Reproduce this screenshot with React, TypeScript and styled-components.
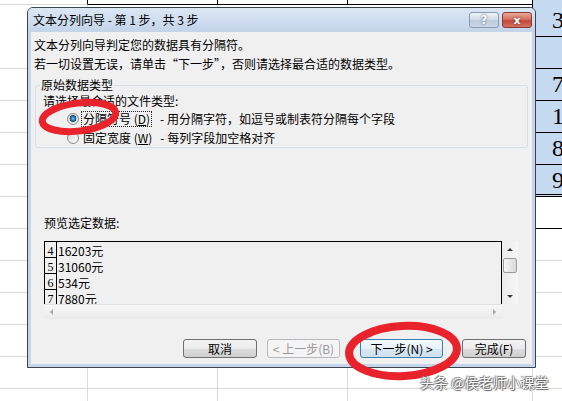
import React from "react";
import styled, { createGlobalStyle } from "styled-components";

const GlobalStyle = createGlobalStyle`
  html, body {
    margin: 0;
    padding: 0;
  }
  body {
    background: #fff;
    font-family: "Noto Sans CJK SC", "Liberation Sans", sans-serif;
    font-size: 12px;
    color: #000;
  }
`;

const Page = styled.div`
  position: relative;
  width: 562px;
  height: 401px;
  overflow: hidden;
  background: #fff;
`;

/* ---------- spreadsheet behind the dialog ---------- */

type Line = "gray" | "black" | "double" | "none";

const lineCss = (l: Line) =>
  l === "black"
    ? "1px solid #000"
    : l === "double"
    ? "3px double #000"
    : l === "none"
    ? "1px solid transparent"
    : "1px solid #d9d9d9";

const Sheet = styled.div`
  margin-top: -27px;
  display: flex;
  flex-direction: column;
`;

const SheetRow = styled.div`
  display: flex;
  height: 32px;
  flex-shrink: 0;
`;

const Cell = styled.div<{ $w: number; $right: Line; $bottom: Line; $fill?: boolean }>`
  width: ${p => p.$w}px;
  flex-shrink: 0;
  box-sizing: border-box;
  border-right: ${p => lineCss(p.$right)};
  border-bottom: ${p => lineCss(p.$bottom)};
  background: ${p => (p.$fill ? "#c5d9f1" : "#fff")};
  font-family: "Liberation Serif", serif;
  font-size: 24px;
  line-height: 31px;
  padding-left: 19px;
  overflow: hidden;
  white-space: nowrap;
`;

const COLS = [88, 130, 130, 185, 60];
const BIG = ["3", "", "7", "1", "8", "9"];

const buildSheet = () => {
  const rows = [];
  for (let r = 0; r < 14; r++) {
    const cells = COLS.map((w, c) => {
      let right: Line = "gray";
      let bottom: Line = "gray";
      let fill = false;
      let text = "";
      if (r === 0) {
        right = c < 4 ? "black" : "none";
        bottom = c === 0 ? "gray" : c === 4 ? "none" : "black";
        fill = c === 4;
      }
      if (r === 1 && c === 0) bottom = "none";
      if (r >= 1 && r <= 7 && c === 3) right = "black";
      if (c === 4 && r >= 1 && r <= 6) {
        fill = true;
        bottom = r === 6 ? "double" : "black";
        text = BIG[r - 1];
      }
      if (c === 4 && r === 7) bottom = "black";
      return (
        <Cell key={c} $w={w} $right={right} $bottom={bottom} $fill={fill}>
          {text}
        </Cell>
      );
    });
    rows.push(<SheetRow key={r}>{cells}</SheetRow>);
  }
  return rows;
};

/* ---------- dialog window ---------- */

const Dialog = styled.div`
  position: absolute;
  left: 27px;
  top: 7px;
  width: 509px;
  height: 361px;
  box-sizing: border-box;
  border: 1px solid #3a4350;
  border-radius: 6px 6px 0 0;
  background: #c6d6ea;
  padding: 0 3px 3px;
  display: flex;
  flex-direction: column;
`;

const TitleBar = styled.div`
  height: 24px;
  margin: 0 -3px;
  padding: 0 3px 0 5px;
  display: flex;
  align-items: center;
  justify-content: space-between;
  border-radius: 5px 5px 0 0;
  background: linear-gradient(#dce7f4, #c3d4e9);
`;

const Title = styled.span`
  font-size: 12px;
  line-height: 16px;
  color: #000;
  white-space: pre;
`;

const CaptionButtons = styled.div`
  display: flex;
  gap: 3px;
`;

const CaptionButton = styled.div<{ $close?: boolean }>`
  width: 30px;
  height: 16px;
  box-sizing: border-box;
  border-radius: 3px;
  border: 1px solid ${p => (p.$close ? "#8a3b33" : "#8a9ab0")};
  background: ${p =>
    p.$close
      ? "linear-gradient(#e9a89c 0%, #d5705f 45%, #c24a3a 55%, #d7705e 100%)"
      : "linear-gradient(#eef3f9 0%, #d2deec 45%, #bccbde 55%, #cad7e7 100%)"};
  display: flex;
  align-items: center;
  justify-content: center;
  color: #fff;
  font-family: "DejaVu Sans", sans-serif;
  font-weight: bold;
  font-size: ${p => (p.$close ? 11 : 12)}px;
  text-shadow: 0 0 2px rgba(40, 40, 60, 0.9);
`;

const Body = styled.div`
  flex: 1;
  background: #f0f0f0;
  display: flex;
  flex-direction: column;
`;

const Intro = styled.div`
  padding: 3px 0 0 3px;
  line-height: 19px;
  white-space: nowrap;
`;

const Group = styled.fieldset`
  margin: 4px 4px 0;
  padding: 0 4px 0;
  border: 1px solid #d5dfe5;
  border-radius: 3px;
  min-inline-size: 0;
`;

const GroupTitle = styled.legend`
  padding: 0 1px;
  line-height: 16px;
  font-size: 12px;
`;

const Prompt = styled.div`
  margin-left: 3px;
  line-height: 16px;
`;

const OptionRow = styled.div`
  display: flex;
  align-items: center;
  height: 19px;
  padding-left: 27px;
  white-space: nowrap;
`;

const RadioDot = styled.span<{ $on?: boolean }>`
  width: 12px;
  height: 12px;
  box-sizing: border-box;
  border-radius: 50%;
  border: 1px solid #8b8b8b;
  margin-right: 2px;
  background: ${p =>
    p.$on
      ? "radial-gradient(circle at 50% 45%, #9fd8f4 0, #2f86bd 1.5px, #1a4e78 3.2px, #dcdcdc 3.6px, #fbfbfb 100%)"
      : "linear-gradient(135deg, #d8d8d8, #fdfdfd)"};
`;

const OptionLabel = styled.span<{ $focus?: boolean }>`
  padding: 0 1px;
  line-height: 14px;
  border: 1px ${p => (p.$focus ? "dotted #222" : "solid transparent")};
`;

const OptionHint = styled.span<{ $gap: number }>`
  margin-left: ${p => p.$gap}px;
`;

const Key = styled.span`
  text-decoration: underline;
`;

const PreviewLabel = styled.div`
  margin: 67px 0 0 13px;
  line-height: 16px;
`;

const Preview = styled.div`
  margin: 10px 0 0 13px;
  display: grid;
  grid-template-columns: 458px 16px;
  grid-template-rows: 63px 15px;
  width: 474px;
`;

const DataArea = styled.div`
  border: 1px solid #000;
  border-bottom: none;
  overflow: hidden;
  background: #f0f0f0;
`;

const DataRow = styled.div`
  display: flex;
  height: 16px;
`;

const RowNum = styled.div`
  width: 12px;
  box-sizing: border-box;
  border-right: 1px solid #000;
  border-bottom: 1px solid #000;
  font-family: "Liberation Serif", serif;
  font-size: 12px;
  line-height: 19px;
  text-align: center;
  overflow: hidden;
`;

const RowText = styled.div`
  padding-left: 1px;
  line-height: 17px;
  font-size: 12px;
`;

const VScroll = styled.div`
  display: flex;
  flex-direction: column;
  align-items: center;
  background: linear-gradient(90deg, #ececec, #f6f6f6);
`;

const ArrowBox = styled.div<{ $h: number }>`
  height: ${p => p.$h}px;
  width: 100%;
  display: flex;
  align-items: center;
  justify-content: center;
`;

const Tri = styled.span<{ $dir: "up" | "down" | "left" | "right"; $c: string }>`
  width: 0;
  height: 0;
  border: 3px solid transparent;
  ${p =>
    p.$dir === "up"
      ? `border-bottom: 3px solid ${p.$c}; border-top-width: 0;`
      : p.$dir === "down"
      ? `border-top: 3px solid ${p.$c}; border-bottom-width: 0;`
      : p.$dir === "left"
      ? `border-right: 3px solid ${p.$c}; border-left-width: 0;`
      : `border-left: 3px solid ${p.$c}; border-right-width: 0;`}
`;

const Thumb = styled.div`
  width: 14px;
  height: 15px;
  box-sizing: border-box;
  border: 1px solid #9b9b9b;
  border-radius: 2px;
  background: linear-gradient(90deg, #f6f6f6, #d9d9d9);
`;

const Filler = styled.div`
  flex: 1;
`;

const HScroll = styled.div`
  display: flex;
  align-items: center;
  justify-content: space-between;
  border-top: 1px solid #e2e2e2;
  background: linear-gradient(#f7f7f7, #ebebeb);
  padding: 0 6px;
`;

const Corner = styled.div`
  background: #f0f0f0;
`;

const ButtonRow = styled.div`
  display: flex;
  margin: 20px 0 0 152px;
`;

const Button = styled.div<{ $w: number; $ml: number; $kind?: "default" | "disabled" }>`
  width: ${p => p.$w}px;
  margin-left: ${p => p.$ml}px;
  height: 19px;
  box-sizing: border-box;
  border-radius: 3px;
  border: 1px solid
    ${p => (p.$kind === "default" ? "#3c7fb1" : p.$kind === "disabled" ? "#b5b9bc" : "#707070")};
  background: ${p =>
    p.$kind === "disabled"
      ? "#f4f4f4"
      : p.$kind === "default"
      ? "linear-gradient(#f4fafd 0%, #e6f1f8 50%, #d7e7f2 51%, #cfe1ee 100%)"
      : "linear-gradient(#f3f3f3 0%, #ebebeb 50%, #dddddd 51%, #cfcfcf 100%)"};
  color: ${p => (p.$kind === "disabled" ? "#9a9a9a" : "#000")};
  display: flex;
  align-items: center;
  justify-content: center;
  line-height: 17px;
  white-space: pre;
`;

/* ---------- annotations over the screenshot ---------- */

const Marks = styled.svg`
  position: absolute;
  left: 0;
  top: 0;
  pointer-events: none;
`;

const Watermark = styled.div`
  position: absolute;
  left: 420px;
  top: 373px;
  font-size: 14px;
  line-height: 19px;
  color: #fff;
  white-space: pre;
  text-shadow: 0 0 1px #444, 1px 1px 1px #666, -1px -1px 1px #888;
`;

const preview = [
  ["4", "16203元"],
  ["5", "31060元"],
  ["6", "534元"],
  ["7", "7880元"],
];

export default function App() {
  return (
    <Page>
      <GlobalStyle />
      <Sheet>{buildSheet()}</Sheet>

      <Dialog>
        <TitleBar>
          <Title>文本分列向导 - 第 1 步，共 3 步</Title>
          <CaptionButtons>
            <CaptionButton>?</CaptionButton>
            <CaptionButton $close>x</CaptionButton>
          </CaptionButtons>
        </TitleBar>
        <Body>
          <Intro>
            文本分列向导判定您的数据具有分隔符。
            <br />
            若一切设置无误，请单击“下一步”，否则请选择最合适的数据类型。
          </Intro>
          <Group>
            <GroupTitle>原始数据类型</GroupTitle>
            <Prompt>请选择最合适的文件类型:</Prompt>
            <OptionRow>
              <RadioDot $on />
              <OptionLabel $focus>
                分隔符号 (<Key>D</Key>)
              </OptionLabel>
              <OptionHint $gap={8}>- 用分隔字符，如逗号或制表符分隔每个字段</OptionHint>
            </OptionRow>
            <OptionRow>
              <RadioDot />
              <OptionLabel>
                固定宽度 (<Key>W</Key>)
              </OptionLabel>
              <OptionHint $gap={6}>- 每列字段加空格对齐</OptionHint>
            </OptionRow>
          </Group>
          <PreviewLabel>预览选定数据:</PreviewLabel>
          <Preview>
            <DataArea>
              {preview.map(([n, t]) => (
                <DataRow key={n}>
                  <RowNum>{n}</RowNum>
                  <RowText>{t}</RowText>
                </DataRow>
              ))}
            </DataArea>
            <VScroll>
              <ArrowBox $h={17}>
                <Tri $dir="up" $c="#3a3a3a" />
              </ArrowBox>
              <Thumb />
              <Filler />
              <ArrowBox $h={16}>
                <Tri $dir="down" $c="#3a3a3a" />
              </ArrowBox>
            </VScroll>
            <HScroll>
              <Tri $dir="left" $c="#a8a8a8" />
              <Tri $dir="right" $c="#a8a8a8" />
            </HScroll>
            <Corner />
          </Preview>
          <ButtonRow>
            <Button $w={74} $ml={0}>
              取消
            </Button>
            <Button $w={73} $ml={10} $kind="disabled">
              {"< 上一步(B)"}
            </Button>
            <Button $w={83} $ml={20} $kind="default">
              {"下一步(N) >"}
            </Button>
            <Button $w={64} $ml={19}>
              完成(F)
            </Button>
          </ButtonRow>
        </Body>
      </Dialog>

      <Marks width={562} height={401} viewBox="0 0 562 401">
        <ellipse cx={79} cy={117} rx={37} ry={14} fill="none" stroke="#e8232b" strokeWidth={7} transform="rotate(-7 79 117)" />
        <ellipse cx={403} cy={351} rx={54} ry={25} fill="none" stroke="#e8232b" strokeWidth={8} transform="rotate(-3 403 351)" />
      </Marks>
      <Watermark>头条 @侯老师小课堂</Watermark>
    </Page>
  );
}
